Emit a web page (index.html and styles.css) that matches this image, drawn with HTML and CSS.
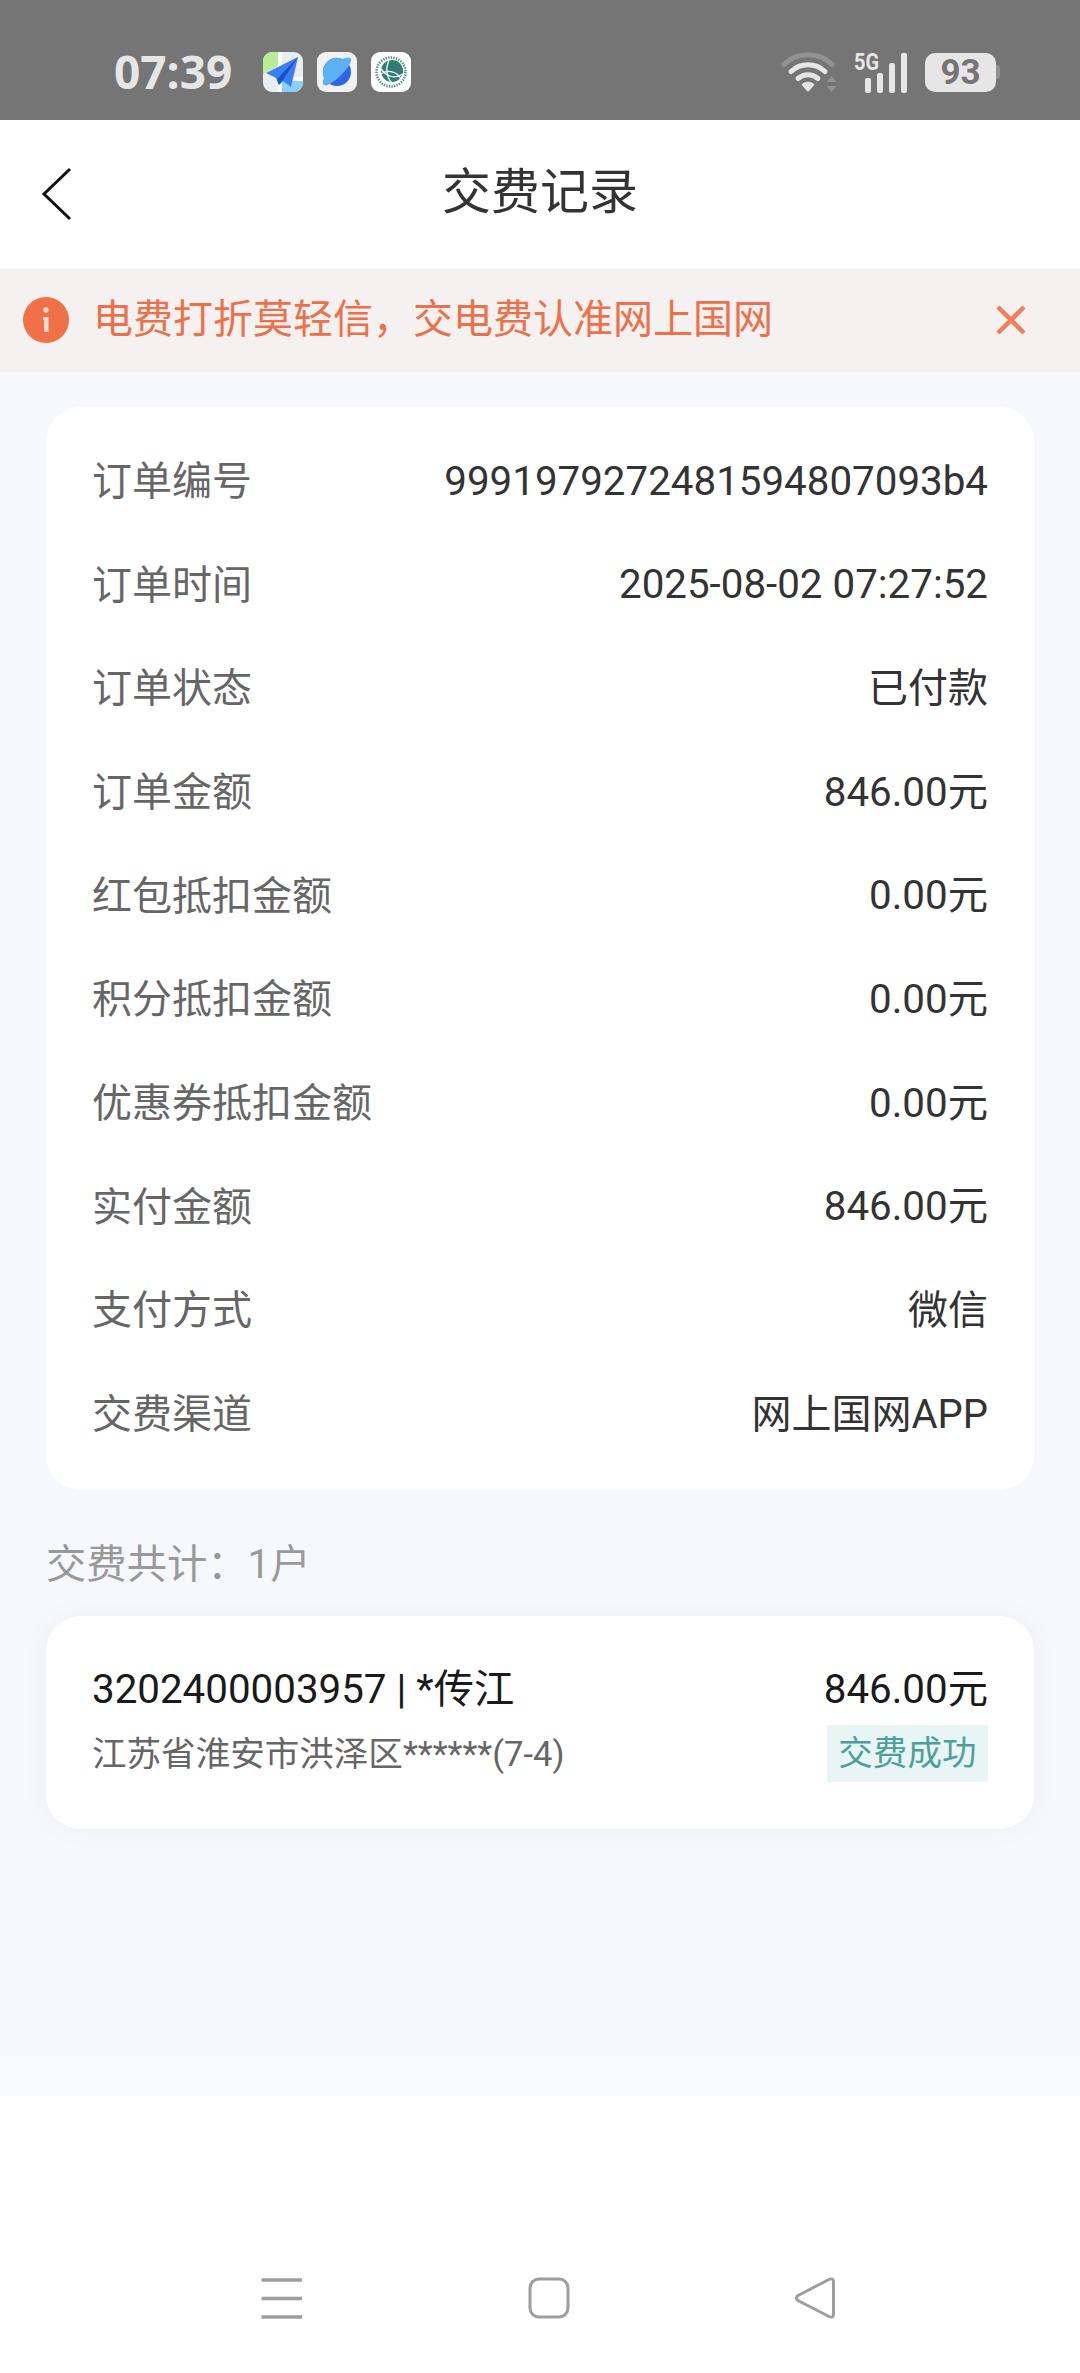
FILE: index.html
```
<!DOCTYPE html>
<html lang="zh-CN">
<head>
  <meta charset="UTF-8">
  <title>交费记录</title>
  <link rel="stylesheet" href="styles.css">
</head>
<body>
  <div class="status-bar">
    <span class="time">07:39</span>
    <div class="app-icons">
      <svg class="app-icon" viewBox="0 0 40 40">
        <defs>
          <clipPath id="tile"><rect width="40" height="40" rx="9"/></clipPath>
        </defs>
        <g clip-path="url(#tile)">
          <rect width="40" height="40" fill="#e9eef3"/>
          <path d="M0 0H15V14L0 22Z" fill="#b9ec98"/>
          <path d="M15 0H19V40H15Z" fill="#fff"/>
          <path d="M19 29H40V40H19Z" fill="#86d0fa"/>
          <path d="M19 25H40V29H19Z" fill="#fff"/>
          <path d="M35 5L3 21L13 26L16 33L20 29L28 35Z" fill="#3a80f4"/>
          <path d="M35 5L14 27L16 33L20 28Z" fill="#1d50c8"/>
        </g>
      </svg>
      <svg class="app-icon" viewBox="0 0 40 40">
        <rect width="40" height="40" rx="9" fill="#f0f1f2"/>
        <circle cx="20" cy="20" r="14" fill="#2f66e6"/>
        <path d="M25 7C29 6 33 5 34 7C35 10 31 16 24 23C17 30 9 35 7 33C5 32 6 29 7 26C3 14 14 2 25 7Z" fill="#5db0f4"/>
      </svg>
      <svg class="app-icon" viewBox="0 0 40 40">
        <rect width="40" height="40" rx="9" fill="#fff"/>
        <circle cx="20" cy="20" r="14.5" fill="none" stroke="#5b8f8a" stroke-width="2.600" stroke-dasharray="1.4 1.200"/>
        <circle cx="21" cy="19" r="11" fill="#2f7d76"/>
        <g fill="none" stroke="#fff" stroke-width="1.300">
          <path d="M10 17C16 25 24 27 32 22"/>
          <path d="M18 8C14 17 16 26 21 31"/>
          <path d="M10 22C15 18 25 18 30 27"/>
        </g>
      </svg>
    </div>
    <div class="signals">
      <svg class="wifi" viewBox="0 0 58 42">
        <g fill="none" stroke-width="5" stroke-linecap="round">
          <path d="M4 13.500C17 0.500 39 0.500 52 13.500" stroke="#929292"/>
          <path d="M11 20.500C20.500 11.500 35.500 11.500 45 20.500" stroke="#e6e6e6"/>
          <path d="M18 27.500C24 22.500 32 22.500 38 27.500" stroke="#e6e6e6"/>
        </g>
        <path d="M22 33.500C25 30.500 31 30.500 34 33.500L28.500 40Q28 40.500 27.500 40Z" fill="#e6e6e6" stroke="#e6e6e6"/>
        <path d="M46.500 31L51.500 25L56.500 31ZM46.500 35L51.500 41L56.500 35Z" fill="#929292"/>
      </svg>
      <svg class="cell" viewBox="0 0 56 42">
        <text class="cell-label" x="1" y="18.500" textLength="25" lengthAdjust="spacingAndGlyphs">5G</text>
        <g fill="#e6e6e6">
          <rect x="12" y="27" width="6" height="15" rx="2"/>
          <rect x="24" y="22" width="6" height="20" rx="2"/>
          <rect x="36" y="12" width="6" height="30" rx="2"/>
          <rect x="48" y="2" width="6" height="40" rx="2"/>
        </g>
      </svg>
      <div class="battery">
        <span class="battery-level">93</span>
        <span class="battery-tip"></span>
      </div>
    </div>
  </div>

  <header class="header">
    <svg class="back" viewBox="0 0 32 54">
      <path d="M29 2L3 27L29 52" fill="none" stroke="#111" stroke-width="3"/>
    </svg>
    <h1 class="title">交费记录</h1>
  </header>

  <div class="notice">
    <svg class="notice-icon" viewBox="0 0 46 46">
      <circle cx="23" cy="23" r="23" fill="#f07047"/>
      <circle cx="23" cy="13" r="2.800" fill="#fbd9cd"/>
      <path d="M20 20H25.500V35H21V23H20Z" fill="#fbd9cd"/>
    </svg>
    <span class="notice-text">电费打折莫轻信，交电费认准网上国网</span>
    <svg class="notice-close" viewBox="0 0 30 30">
      <path d="M2 2L28 28M28 2L2 28" stroke="#f0805c" stroke-width="4.500"/>
    </svg>
  </div>

  <main class="content">
    <section class="card order">
      <div class="row"><span class="label">订单编号</span><span class="value">9991979272481594807093b4</span></div>
      <div class="row"><span class="label">订单时间</span><span class="value">2025-08-02 07:27:52</span></div>
      <div class="row"><span class="label">订单状态</span><span class="value text">已付款</span></div>
      <div class="row"><span class="label">订单金额</span><span class="value">846.00元</span></div>
      <div class="row"><span class="label">红包抵扣金额</span><span class="value">0.00元</span></div>
      <div class="row"><span class="label">积分抵扣金额</span><span class="value">0.00元</span></div>
      <div class="row"><span class="label">优惠券抵扣金额</span><span class="value">0.00元</span></div>
      <div class="row"><span class="label">实付金额</span><span class="value">846.00元</span></div>
      <div class="row"><span class="label">支付方式</span><span class="value text">微信</span></div>
      <div class="row"><span class="label">交费渠道</span><span class="value text">网上国网APP</span></div>
    </section>

    <p class="total">交费共计：1户</p>

    <section class="card account">
      <div class="account-main">
        <span>3202400003957 | *传江</span>
        <span>846.00元</span>
      </div>
      <div class="account-sub">
        <span class="address">江苏省淮安市洪泽区******(7-4)</span>
        <span class="tag">交费成功</span>
      </div>
    </section>
  </main>
  <div class="content-end"></div>

  <nav class="nav-bar">
    <svg class="nav-icon" viewBox="0 0 42 42">
      <path d="M0.500 3H41M0.500 21.500H41M0.500 40H41" stroke="#9e9e9e" stroke-width="3.500"/>
    </svg>
    <svg class="nav-icon" viewBox="0 0 42 42">
      <rect x="2" y="2" width="38" height="38" rx="9" fill="none" stroke="#9e9e9e" stroke-width="3"/>
    </svg>
    <svg class="nav-icon" viewBox="0 0 42 42">
      <path d="M3 18.500L34 2.500Q38.500 0.500 38.500 5V37Q38.500 41.500 34 39.500L3 23.500Q0 21 3 18.500Z" fill="none" stroke="#9e9e9e" stroke-width="3"/>
    </svg>
  </nav>
</body>
</html>
```
FILE: styles.css
```
* {
  box-sizing: border-box;
}
body {
  margin: 0;
  width: 1080px;
  height: 2373px;
  display: flex;
  flex-direction: column;
  font-family: Roboto, "Noto Sans CJK SC", sans-serif;
  line-height: 1.4;
  background: #fff;
  color: #333;
}
svg {
  display: block;
}

/* status bar */
.status-bar {
  height: 120px;
  padding: 24px 80px 0 114px;
  display: flex;
  align-items: center;
  background: #757575;
}
.time {
  width: 149px;
  padding-bottom: 2px;
  font-family: "Open Sans", sans-serif;
  font-size: 46px;
  font-weight: 700;
  line-height: 48px;
  color: #e6e6e6;
}
.app-icons {
  display: flex;
  gap: 14px;
}
.app-icon {
  width: 40px;
  height: 40px;
}
.signals {
  margin-left: auto;
  display: flex;
  align-items: center;
}
.wifi {
  width: 58px;
  height: 42px;
  margin-right: 15px;
}
.cell {
  width: 56px;
  height: 42px;
  margin-right: 16px;
  overflow: visible;
}
.cell-label {
  font-family: Roboto, sans-serif;
  font-size: 24px;
  line-height: 24px;
  font-weight: 700;
  fill: #e6e6e6;
}
.battery {
  display: flex;
  align-items: center;
}
.battery-level {
  width: 71px;
  height: 39px;
  border-radius: 10px;
  background: #e6e6e6;
  color: #757575;
  font-family: Roboto, sans-serif;
  font-size: 35px;
  font-weight: 700;
  line-height: 39px;
  text-align: center;
}
.battery-tip {
  width: 4px;
  height: 14px;
  border-radius: 0 4px 4px 0;
  background: #929292;
}

/* page header */
.header {
  height: 149px;
  padding: 0 41px 2px;
  display: grid;
  grid-template-columns: 32px 1fr 32px;
  align-items: center;
}
.back {
  width: 32px;
  height: 54px;
}
.title {
  margin: 0;
  font-size: 48.96px;
  font-weight: 400;
  text-align: center;
}

.notice {
  height: 103px;
  padding: 0 54px 2px 23px;
  display: flex;
  align-items: center;
  background: #f5f1f0;
  color: #ee7049;
}
.notice-icon {
  width: 46px;
  height: 46px;
  margin-right: 24px;
}
.notice-text {
  font-size: 40px;
}
.notice-close {
  width: 30px;
  height: 30px;
  margin-left: auto;
}

/* content */
.content {
  height: 1684px;
  padding: 35px 46px 0;
  background: #f6f8fb;
}
.content-end {
  height: 40px;
  background: #f9fbfd;
}
.card {
  background: #fff;
  border-radius: 34.5px;
}
.order {
  padding: 23px 46px;
}
.row {
  height: 103.68px;
  display: flex;
  align-items: center;
  justify-content: space-between;
  font-size: 40.32px;
}
.label,
.value.text {
  font-size: 40px;
}
.label {
  color: #666;
}
.total {
  margin: 46px 0 22px;
  font-size: 40.32px;
  line-height: 58px;
  color: #999;
}
.account {
  height: 213px;
  padding: 46px 46px 0;
  box-shadow: 0 0 29px rgba(0, 0, 0, 0.04);
}
.account-main,
.account-sub {
  display: flex;
  align-items: center;
  justify-content: space-between;
}
.account-main {
  height: 56px;
  font-size: 40.32px;
  color: #1a1a1a;
}
.account-sub {
  height: 72px;
  font-size: 34.56px;
  color: #666;
}
.tag {
  height: 57px;
  padding: 0 11.5px;
  line-height: 56px;
  background: #e9f5f5;
  color: #4da09a;
}

/* system navigation */
.nav-bar {
  flex: 1;
  padding: 181px 243px 54px 261px;
  display: flex;
  justify-content: space-between;
}
.nav-icon {
  width: 42px;
  height: 42px;
}
```
